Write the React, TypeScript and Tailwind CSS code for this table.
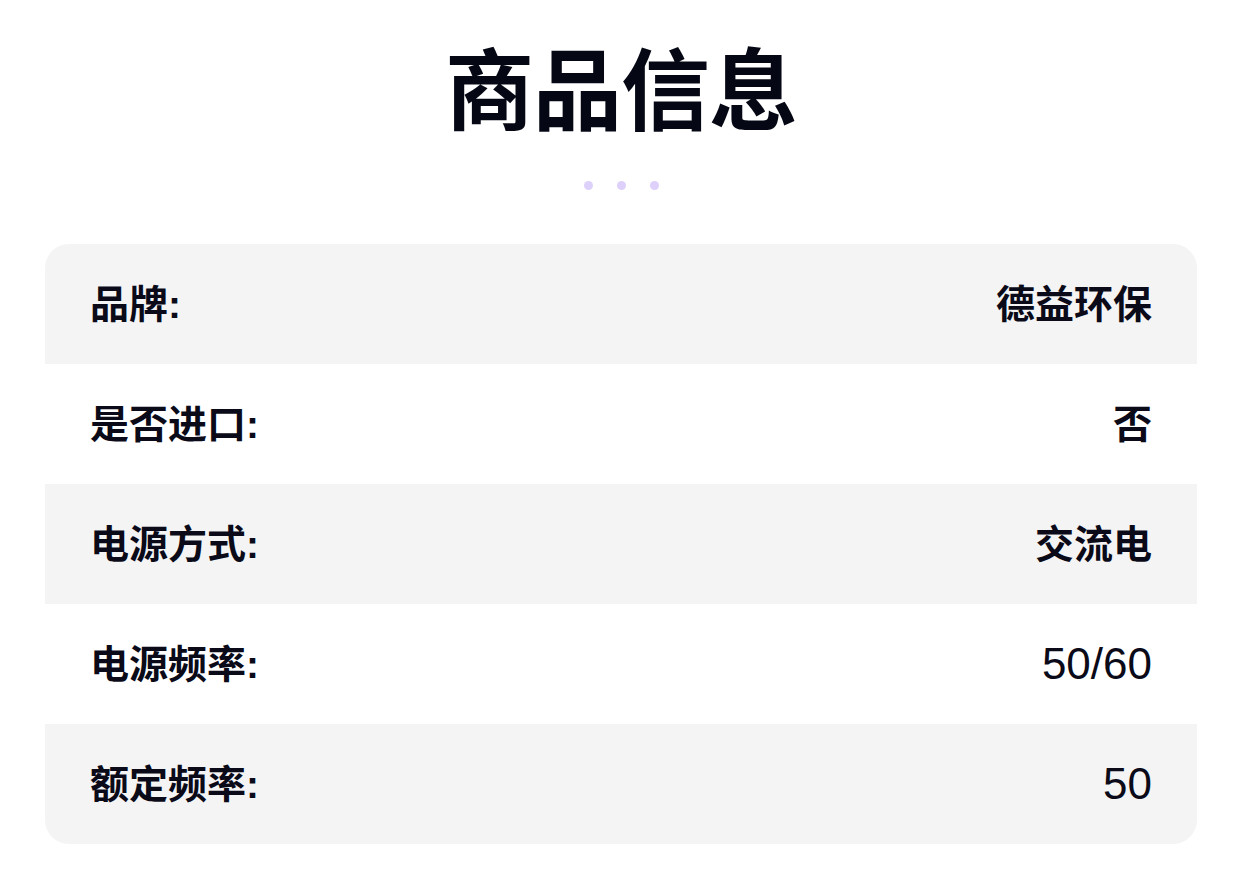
import React from 'react';

interface Spec {
    label: string;
    value: string;
    numeric?: boolean;
}

const SPECS: Spec[] = [
    { label: '品牌', value: '德益环保' },
    { label: '是否进口', value: '否' },
    { label: '电源方式', value: '交流电' },
    { label: '电源频率', value: '50/60', numeric: true },
    { label: '额定频率', value: '50', numeric: true },
];

export default function App() {
    return (
        <div
            className="min-h-screen w-full bg-white text-[#0a0a18]"
            style={{ fontFamily: '"Liberation Sans", "Noto Sans CJK SC", sans-serif' }}
        >
            <div className="flex flex-col items-center pt-[48px] px-[45px]">
                {/* Header */}
                <h1 className="text-[89px] font-bold leading-none tracking-[-1px] text-[#050814]">商品信息</h1>
                <div className="flex items-center gap-[24px] mt-[44px]">
                    <span className="w-[9px] h-[9px] rounded-full bg-[#ddd0fb]" />
                    <span className="w-[9px] h-[9px] rounded-full bg-[#ddd0fb]" />
                    <span className="w-[9px] h-[9px] rounded-full bg-[#ddd0fb]" />
                </div>

                {/* Spec table */}
                <div className="w-full mt-[54px] rounded-[24px] overflow-hidden">
                    {SPECS.map((spec, i) => (
                        <div
                            key={spec.label}
                            className={
                                'flex items-center justify-between h-[120px] px-[45px] ' +
                                (i % 2 === 0 ? 'bg-[#f4f4f4]' : 'bg-white')
                            }
                        >
                            <span className="text-[39px] font-bold leading-none">{spec.label}:</span>
                            {spec.numeric ? (
                                <span className="text-[44px] font-normal leading-none">{spec.value}</span>
                            ) : (
                                <span className="text-[39px] font-bold leading-none">{spec.value}</span>
                            )}
                        </div>
                    ))}
                </div>
            </div>
        </div>
    );
}
